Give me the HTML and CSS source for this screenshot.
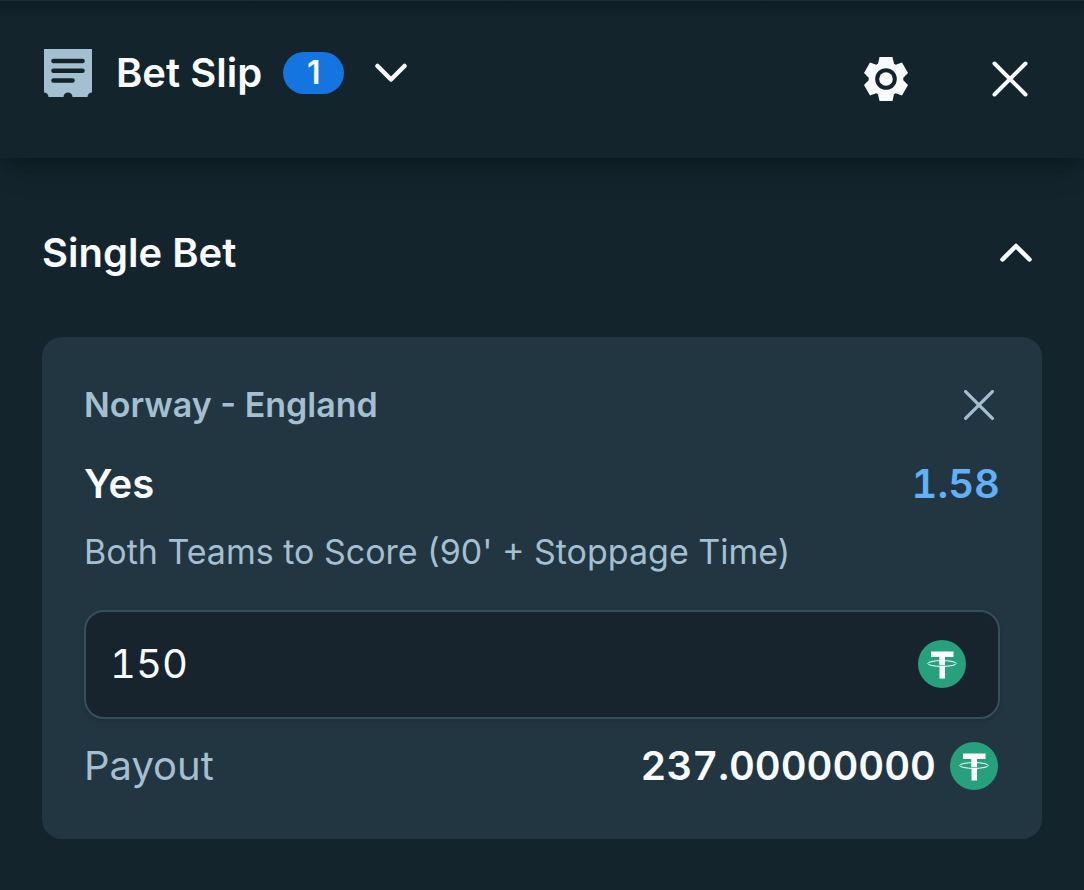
FILE: index.html
```html
<!DOCTYPE html>
<html lang="en">
<head>
<meta charset="utf-8">
<meta name="viewport" content="width=device-width, initial-scale=1">
<title>Bet Slip</title>
<link rel="stylesheet" href="styles.css">
</head>
<body>
<svg class="sprite" aria-hidden="true">
  <symbol id="tether" viewBox="0 0 48 48">
    <circle cx="24" cy="24" r="24" fill="#26a17b"/>
    <path d="M13 11.500h22.500v5.500h-8.500v8.200h-5.500v-8.200h-8.500zM21.500 26.300h5.500v12.200h-5.500z" fill="#fff"/>
    <ellipse cx="24" cy="23.500" rx="14.200" ry="2.900" fill="none" stroke="#fff" stroke-width="1"/>
    <path d="M21.500 17h5.500v7.800h-5.500z" fill="#fff"/>
  </symbol>
</svg>
<header class="header">
  <button class="picker" type="button">
    <svg class="icon-slip" viewBox="0 0 48 48" aria-hidden="true">
      <path d="M0 0h48v43.500a4.500 4.500 0 0 0-4.500 4.500h-15a4.500 4.500 0 0 0-9 0h-15a4.500 4.500 0 0 0-4.500-4.500z" fill="#a3bfd0"/>
      <path d="M9.500 12h29M9.500 21.700h29M9.500 31.500h19" fill="none" stroke="#13242d" stroke-width="4.600" stroke-linecap="round"/>
    </svg>
    <span class="title">Bet Slip</span>
    <span class="badge">1</span>
    <svg class="icon-chevron" viewBox="0 0 32 20" aria-hidden="true"><path d="M2.500 3 16 16.500 29.500 3"/></svg>
  </button>
  <div class="actions">
    <button class="icon-button" type="button" aria-label="Settings">
      <svg class="icon-gear" viewBox="0 0 44 44" aria-hidden="true">
        <path fill-rule="evenodd" fill="#f8fbff" d="M15.500 0h13l1.500 6.800 1.800 1 6.200-2.300 6 10.500-4.700 4.800v2.400l4.700 4.800-6 10.500-6.200-2.300-1.800 1-1.500 6.800h-13l-1.500-6.800-1.800-1-6.200 2.300-6-10.500 4.700-4.800v-2.400l-4.700-4.800 6-10.500 6.200 2.300 1.800-1zM22 11.200a10.800 10.800 0 1 0 0 21.600 10.800 10.800 0 1 0 0-21.600z"/>
        <circle cx="22" cy="22" r="6.800" fill="#f8fbff"/>
      </svg>
    </button>
    <button class="icon-button" type="button" aria-label="Close">
      <svg class="icon-close" viewBox="0 0 36 36" aria-hidden="true"><path d="M2.500 2.500l31 31M33.500 2.500l-31 31"/></svg>
    </button>
  </div>
</header>
<main class="content">
  <div class="section-head">
    <h2 class="title">Single Bet</h2>
    <button class="icon-button" type="button" aria-label="Collapse">
      <svg class="icon-chevron" viewBox="0 0 32 20" aria-hidden="true"><path d="M2.500 16.500 16 3 29.500 16.500"/></svg>
    </button>
  </div>
  <article class="card">
    <div class="row event">
      <h3 class="match">Norway - England</h3>
      <button class="icon-button remove" type="button" aria-label="Remove bet">
        <svg class="icon-remove" viewBox="0 0 28 28" aria-hidden="true"><path d="M1.500 1.500l25 25M26.500 1.500l-25 25"/></svg>
      </button>
    </div>
    <div class="row selection">
      <span class="title">Yes</span>
      <span class="odds">1.58</span>
    </div>
    <p class="market">Both Teams to Score (90' + Stoppage Time)</p>
    <div class="field">
      <input class="stake" type="text" inputmode="decimal" value="150" aria-label="Stake in USDT">
      <svg class="coin" role="img" aria-label="USDT"><use href="#tether"/></svg>
    </div>
    <div class="row">
      <span class="label">Payout</span>
      <span class="payout">237.00000000 <svg class="coin" role="img" aria-label="USDT"><use href="#tether"/></svg></span>
    </div>
  </article>
</main>
</body>
</html>
```
FILE: styles.css
```css
* {
  box-sizing: border-box;
}

body {
  margin: 0;
  min-height: 100vh;
  background: #13242d;
  color: #f8fbff;
  font: 400 40px/48px Inter, "Liberation Sans", sans-serif;
}

h2, h3, p {
  margin: 0;
}

button {
  border: 0;
  padding: 0;
  background: none;
  color: inherit;
  font: inherit;
  cursor: pointer;
}

svg {
  display: block;
  flex: none;
}

.sprite {
  position: absolute;
  width: 0;
  height: 0;
}

.header {
  display: flex;
  align-items: center;
  justify-content: space-between;
  padding: 48px 56px 49px 44px;
  border-top: 1px solid #1d303a;
  background: linear-gradient(#0e1c24, #13242d 16px);
  box-shadow: 0 20px 30px -10px rgba(0, 0, 0, 0.2), 0 6px 12px -4px rgba(0, 0, 0, 0.25);
}

.picker {
  display: flex;
  align-items: center;
  padding-bottom: 12px;
}

.icon-slip {
  width: 48px;
  height: 48px;
  margin-right: 24px;
}

.title {
  font-size: 40px;
  font-weight: 600;
}

.badge {
  min-width: 61px;
  margin: 0 31px 0 21px;
  padding: 0 16px;
  border-radius: 21px;
  background: #1475e1;
  font-size: 32px;
  font-weight: 600;
  line-height: 42px;
  text-align: center;
}

.actions {
  display: flex;
  align-items: center;
  gap: 84px;
}

.icon-button {
  display: flex;
  align-items: center;
  justify-content: center;
}

.icon-chevron,
.icon-close,
.icon-remove {
  fill: none;
  stroke: #f8fbff;
  stroke-linecap: round;
  stroke-linejoin: round;
}

.icon-chevron {
  width: 32px;
  height: 20px;
  stroke-width: 4.5;
}

.icon-gear {
  width: 44px;
  height: 44px;
}

.icon-close {
  width: 36px;
  height: 36px;
  stroke-width: 4;
}

.icon-remove {
  width: 30px;
  height: 30px;
  stroke: #a3bfd0;
  stroke-width: 3;
}

.content {
  padding: 71px 42px 51px;
}

.section-head {
  display: flex;
  align-items: center;
  justify-content: space-between;
  margin-bottom: 60px;
  padding-right: 10px;
}

.card {
  padding: 44px 42px 49px;
  border-radius: 20px;
  background: #213641;
}

.row {
  display: flex;
  align-items: center;
  justify-content: space-between;
}

.event {
  margin-bottom: 31px;
}

.match {
  color: #a3bfd0;
  font-size: 34px;
  font-weight: 600;
}

.remove {
  margin-right: 6px;
}

.selection {
  margin-bottom: 20px;
}

.odds,
.stake,
.payout {
  font-variant-numeric: tabular-nums;
}

.odds {
  color: #62b0f9;
  font-weight: 600;
}

.market {
  margin-bottom: 34px;
  color: #a3bfd0;
  font-size: 34px;
}

.field {
  display: flex;
  align-items: center;
  margin-bottom: 23px;
  padding: 28px 32px 29px 24px;
  border: 2px solid #374f5c;
  border-radius: 20px;
  background: #17242d;
  box-shadow: 0 2px 4px rgba(0, 0, 0, 0.15);
}

.stake {
  flex: 1;
  min-width: 0;
  height: 48px;
  border: 0;
  padding: 0;
  background: none;
  color: inherit;
  font-family: inherit;
  font-size: 40px;
  line-height: 48px;
  outline: none;
}

.coin {
  width: 48px;
  height: 48px;
}

.label {
  color: #a3bfd0;
}

.payout {
  display: flex;
  align-items: center;
  gap: 14px;
  padding-right: 2px;
  font-weight: 600;
}
```
